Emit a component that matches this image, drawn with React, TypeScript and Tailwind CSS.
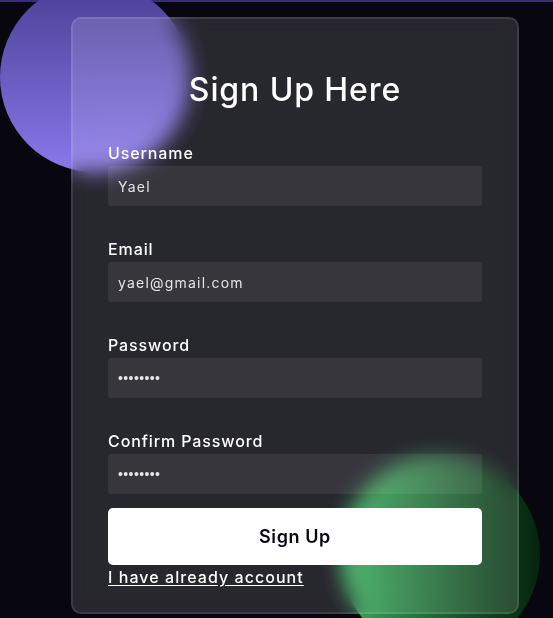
import React from "react";

const font = { fontFamily: "Inter, 'Open Sans', sans-serif" };
const pwFont = { fontFamily: "'Liberation Sans', Arial, sans-serif" };

function Field({ label, type, value, first }: { label: string; type: string; value: string; first?: boolean }) {
  const pw = type === "password";
  return (
    <div className="flex flex-col">
      <label className={`${first ? "mt-[29px]" : "mt-[30px]"} block h-[26px] text-[16px] leading-[26px] font-medium text-white tracking-[0.9px]`}>
        {label}
      </label>
      <input
        type={type}
        defaultValue={value}
        readOnly
        className={`h-[40px] w-full rounded-[3px] bg-white/[0.07] px-[10px] text-[14px] font-normal text-[#e5e5e5] outline-none ${pw ? "tracking-[0.4px]" : "tracking-[1.2px]"}`}
        style={pw ? pwFont : font}
      />
    </div>
  );
}

export default function App() {
  return (
    <div className="relative min-h-[618px] w-full overflow-hidden bg-[#080710]" style={font}>
      <div className="h-[2px] w-full bg-[#372b7a]" />
      {/* decorative shapes */}
      <div className="absolute left-0 top-[-18px] h-[190px] w-[190px] rounded-full bg-gradient-to-b from-[#4a4095] to-[#8a78ec]" />
      <div className="absolute left-[340px] top-[455px] h-[200px] w-[200px] rounded-full bg-gradient-to-r from-[#36b05c] to-[#06240d]" />

      <div className="relative ml-[71px] mt-[15px] flex h-[597px] w-[448px] flex-col rounded-[10px] border-2 border-white/10 bg-white/[0.13] px-[35px] pt-[50px] backdrop-blur-[10px]">
        <h3 className="h-[42px] text-center text-[32px] font-medium leading-[42px] text-white tracking-[0.9px]">Sign Up Here</h3>
        <Field label="Username" type="text" value="Yael" first />
        <Field label="Email" type="text" value="yael@gmail.com" />
        <Field label="Password" type="password" value="12345678" />
        <Field label="Confirm Password" type="password" value="12345678" />
        <button className="mt-[14px] h-[57px] w-full rounded-[5px] bg-white text-[18px] font-semibold text-[#080710] tracking-[0.6px]">
          Sign Up
        </button>
        <div className="leading-[24px]">
          <a href="#" className="text-[16px] font-medium text-white underline underline-offset-2 tracking-[1.05px]">
            I have already account
          </a>
        </div>
      </div>
    </div>
  );
}
